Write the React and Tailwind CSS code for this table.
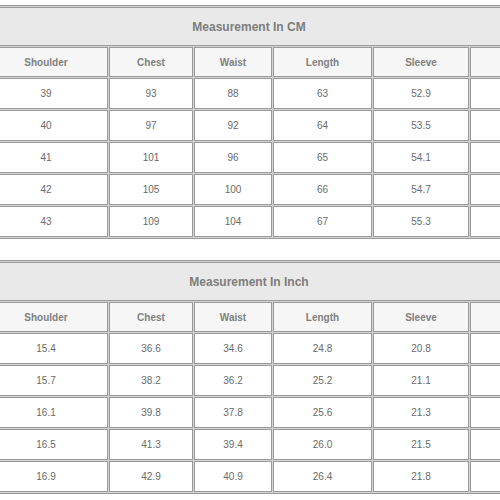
const columns = ['Shoulder', 'Chest', 'Waist', 'Length', 'Sleeve', '']
const widths = ['w-[124px]', 'w-[84px]', 'w-[78px]', 'w-[99px]', 'w-[96px]', 'w-[44px]']

const tables = [
    {
        title: 'Measurement In CM',
        rows: [
            ['39', '93', '88', '63', '52.9', ''],
            ['40', '97', '92', '64', '53.5', ''],
            ['41', '101', '96', '65', '54.1', ''],
            ['42', '105', '100', '66', '54.7', ''],
            ['43', '109', '104', '67', '55.3', ''],
        ],
    },
    {
        title: 'Measurement In Inch',
        rows: [
            ['15.4', '36.6', '34.6', '24.8', '20.8', ''],
            ['15.7', '38.2', '36.2', '25.2', '21.1', ''],
            ['16.1', '39.8', '37.8', '25.6', '21.3', ''],
            ['16.5', '41.3', '39.4', '26.0', '21.5', ''],
            ['16.9', '42.9', '40.9', '26.4', '21.8', ''],
        ],
    },
]

function SizeTable({ title, rows, className }) {
    return (
        <table className={`ml-[-18px] w-[534px] table-fixed border-separate border-spacing-[1px] border border-[#9a9a9a] bg-[#d4d4d4] ${className}`}>
            <colgroup>
                {widths.map((w, i) => <col key={i} className={w} />)}
            </colgroup>
            <tbody>
                <tr>
                    <td colSpan={6} className="h-[39px] p-0 border border-[#9a9a9a] bg-[#e9e9e9] text-center text-[12px] font-bold text-[#7d7d7d]">
                        {title}
                    </td>
                </tr>
                <tr>
                    {columns.map((c, i) => (
                        <td key={i} className="h-[30px] p-0 border border-[#9a9a9a] bg-[#f6f6f6] text-center text-[10px] font-bold text-[#808080]">
                            {c}
                        </td>
                    ))}
                </tr>
                {rows.map((r, ri) => (
                    <tr key={ri}>
                        {r.map((v, ci) => (
                            <td key={ci} className="h-[31px] p-0 border border-[#9a9a9a] bg-white text-center text-[10px] text-[#6a6a6a]">
                                {v}
                            </td>
                        ))}
                    </tr>
                ))}
            </tbody>
        </table>
    )
}

export default function App() {
    return (
        <div className="w-[500px] h-[500px] overflow-hidden bg-white pt-[5px] font-['Liberation_Sans',Arial,sans-serif]">
            <SizeTable {...tables[0]} />
            <SizeTable {...tables[1]} className="mt-[21px]" />
        </div>
    )
}
